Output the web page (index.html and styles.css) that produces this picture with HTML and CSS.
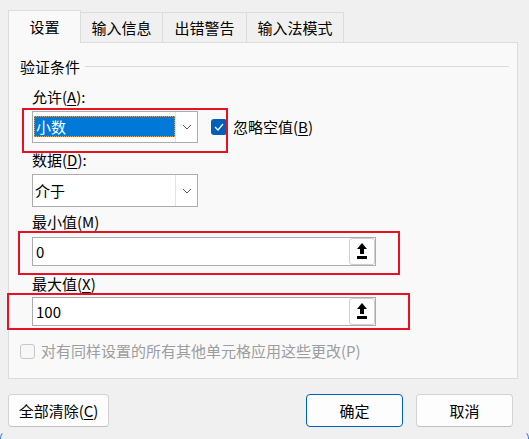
FILE: index.html
```html
<!DOCTYPE html>
<html lang="zh-CN">
<head>
<meta charset="utf-8">
<title>数据验证</title>
<link rel="stylesheet" href="styles.css">
</head>
<body>
<div class="dialog">
  <div class="tabs">
    <div class="tab active">设置</div>
    <div class="tab t2">输入信息</div>
    <div class="tab t3">出错警告</div>
    <div class="tab t4">输入法模式</div>
  </div>
  <div class="panel">
    <div class="group-title"><span>验证条件</span><div class="rule"></div></div>
    <div class="form">
      <div class="label lab1">允许(<u>A</u>):</div>
      <div class="row">
        <div class="combo">
          <div class="combo-value"><span class="sel">小数</span></div>
          <div class="combo-btn"><svg width="10" height="6" viewBox="0 0 10 6"><path d="M1 1 L5 5 L9 1" fill="none" stroke="#555" stroke-width="1"/></svg></div>
        </div>
        <div class="check"><span class="box checked"><svg width="10" height="8" viewBox="0 0 10 8"><path d="M1 4 L4 7 L9 1" fill="none" stroke="#fff" stroke-width="1.2"/></svg></span>忽略空值(<u>B</u>)</div>
      </div>
      <div class="label lab2">数据(<u>D</u>):</div>
      <div class="combo combo2">
        <div class="combo-value"><span class="plain">介于</span></div>
        <div class="combo-btn"><svg width="10" height="6" viewBox="0 0 10 6"><path d="M1 1 L5 5 L9 1" fill="none" stroke="#555" stroke-width="1"/></svg></div>
      </div>
      <div class="label lab3">最小值(M)</div>
      <div class="input">
        <span class="val">0</span>
        <span class="pick"><svg width="12" height="17" viewBox="0 0 12 17"><path d="M6 0 L11 6 L8 6 L8 11 L4 11 L4 6 L1 6 Z" fill="#000"/><rect x="1" y="13" width="10" height="3" fill="#000"/></svg></span>
      </div>
      <div class="label lab4">最大值(<u>X</u>)</div>
      <div class="input">
        <span class="val">100</span>
        <span class="pick"><svg width="12" height="17" viewBox="0 0 12 17"><path d="M6 0 L11 6 L8 6 L8 11 L4 11 L4 6 L1 6 Z" fill="#000"/><rect x="1" y="13" width="10" height="3" fill="#000"/></svg></span>
      </div>
    </div>
    <div class="apply-row"><span class="box disabled"></span>对有同样设置的所有其他单元格应用这些更改(P)</div>
  </div>
  <div class="buttons">
    <div class="btn clear">全部清除(<u>C</u>)</div>
    <div class="spacer"></div>
    <div class="btn ok">确定</div>
    <div class="btn cancel">取消</div>
  </div>
  <div class="mark m1"></div>
  <div class="mark m2"></div>
  <div class="mark m3"></div>
  <div class="corner cl"></div>
  <div class="corner cr"></div>
</div>
</body>
</html>
```

FILE: styles.css
```css
html, body {
  margin: 0;
  padding: 0;
  background: #f0f0f0;
}
body {
  width: 529px;
  height: 439px;
  overflow: hidden;
  font-family: "Noto Sans CJK SC", "Microsoft YaHei", sans-serif;
  font-size: 15px;
  color: #1a1a1a;
}
u { text-decoration: underline; text-underline-offset: 2px; text-decoration-thickness: 1px; }
.dialog {
  position: relative;
  width: 529px;
  height: 439px;
  padding-top: 10px;
  box-sizing: border-box;
}
.tabs {
  display: flex;
  align-items: flex-end;
  margin-left: 8px;
  height: 32px;
  position: relative;
  z-index: 2;
}
.tab {
  box-sizing: border-box;
  height: 30px;
  line-height: 20px;
  padding-top: 5px;
  text-align: center;
  border: 1px solid #dcdcdc;
  border-left: none;
  border-bottom: none;
  background: #f0f0f0;
  color: #000;
}
.tab.active {
  width: 73px;
  height: 33px;
  margin-bottom: -1px;
  padding-top: 6px;
  background: #f9f9f9;
  border-left: 1px solid #dcdcdc;
}
.t2 { width: 82px; }
.t3 { width: 84px; }
.t4 { width: 97px; }
.panel {
  position: relative;
  z-index: 1;
  margin-left: 8px;
  width: 510px;
  height: 337px;
  box-sizing: border-box;
  border: 1px solid #dcdcdc;
  background: #f9f9f9;
  padding: 13px 8px 0 11px;
}
.group-title {
  display: flex;
  align-items: center;
  height: 21px;
  line-height: 21px;
  gap: 5px;
  color: #000;
}
.group-title .rule {
  flex: 1;
  height: 1px;
  background: #dadada;
  margin-top: 0;
}
.form { margin-left: 12px; }
.label { line-height: 20px; height: 20px; color: #000; }
.lab1 { margin-top: 10px; }
.lab2 { margin-top: 7px; }
.lab3 { margin-top: 5px; }
.lab4 { margin-top: 8px; }
.row {
  display: flex;
  align-items: center;
  margin-top: 4px;
}
.combo {
  display: flex;
  width: 166px;
  height: 32px;
  box-sizing: border-box;
  border: 1px solid #acacac;
  background: #fff;
}
.combo2 { height: 33px; margin-top: 4px; }
.combo-value {
  flex: 1;
  display: flex;
  padding: 4px 0 5px 1px;
}
.combo2 .combo-value { align-items: center; padding: 0 0 0 2px; }
.sel {
  flex: 1;
  height: 21px;
  line-height: 19px;
  box-sizing: border-box;
  background: #0078d7;
  color: #fff;
  padding-left: 1px;
  border: 1px dotted #f0a040;
}
.plain { color: #000; line-height: 20px; }
.combo-btn {
  width: 21px;
  display: flex;
  align-items: center;
  justify-content: center;
  border-left: 1px solid #e4e4e4;
  background: #fff;
}
.check {
  display: flex;
  align-items: center;
  margin-left: 13px;
  color: #000;
  line-height: 20px;
}
.box {
  display: inline-flex;
  align-items: center;
  justify-content: center;
  box-sizing: border-box;
  border-radius: 3px;
}
.box.checked {
  width: 16px;
  height: 16px;
  background: #005fb8;
  margin-right: 6px;
}
.box.disabled {
  width: 15px;
  height: 15px;
  border: 1px solid #c8c8c8;
  background: #f7f7f7;
  margin-right: 6px;
}
.input {
  display: flex;
  align-items: center;
  width: 344px;
  height: 29px;
  box-sizing: border-box;
  border: 1px solid #acacac;
  background: #fff;
  margin-top: 5px;
}
.lab4 + .input { margin-top: 3px; }
.val { flex: 1; padding-left: 3px; color: #000; line-height: 20px; }
.pick {
  width: 26px;
  height: 27px;
  box-sizing: border-box;
  border: 1px solid #cfcfcf;
  border-radius: 3px;
  background: #fdfdfd;
  display: flex;
  align-items: center;
  justify-content: center;
  margin-right: 0;
}
.apply-row {
  display: flex;
  align-items: center;
  margin-top: 15px;
  height: 20px;
  line-height: 20px;
  color: #9d9d9d;
}
.buttons {
  display: flex;
  margin-top: 15px;
  padding: 0 16px 0 8px;
}
.spacer { flex: 1; }
.btn {
  height: 33px;
  box-sizing: border-box;
  border: 1px solid #d3d3d3;
  border-bottom-color: #c0c0c0;
  border-radius: 4px;
  background: #fdfdfd;
  text-align: center;
  line-height: 31px;
  color: #000;
}
.clear { width: 101px; }
.ok { width: 97px; border-color: #005fb8; }
.cancel { width: 97px; margin-left: 13px; }
.mark {
  position: absolute;
  box-sizing: border-box;
  border: 2px solid #e81123;
  z-index: 5;
}
.m1 { left: 22px; top: 108px; width: 206px; height: 45px; }
.m2 { left: 18px; top: 231px; width: 382px; height: 44px; }
.m3 { left: 7px; top: 293px; width: 403px; height: 37px; }
.corner {
  position: absolute;
  width: 14px;
  height: 14px;
  box-sizing: border-box;
  border: 1px solid #3a7bd5;
  border-radius: 50%;
}
.cl { left: 0; top: 431px; border-color: transparent transparent #3a7bd5 #3a7bd5; }
.cr { left: 515px; top: 431px; border-color: transparent #3a7bd5 #3a7bd5 transparent; }
```
